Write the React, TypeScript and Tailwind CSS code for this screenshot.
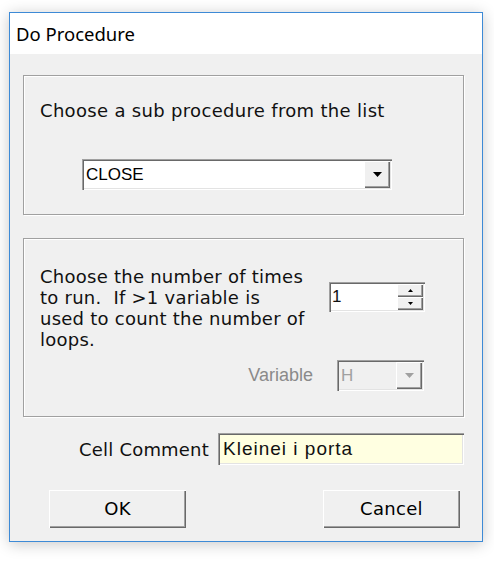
import React from "react";

// classic Win32 3D edges
const raised =
  "shadow-[inset_1px_1px_0_#ffffff,inset_-1px_-1px_0_#696969,inset_-2px_-2px_0_#a0a0a0]";
const sunken =
  "shadow-[inset_1px_1px_0_#a0a0a0,inset_2px_2px_0_#696969,inset_-1px_-1px_0_#ffffff,inset_-2px_-2px_0_#e3e3e3]";
const etched = "border border-[#a0a0a0] shadow-[inset_1px_1px_0_#ffffff,1px_1px_0_#ffffff]";

const verdana = "font-['DejaVu_Sans',Verdana,sans-serif]";
const arial = "font-['Liberation_Sans',Arial,sans-serif]";

const Arrow: React.FC<{ up?: boolean; small?: boolean; color?: string }> = ({ up, small, color = "#000" }) => {
  const w = small ? 5 : 9;
  const h = small ? 3 : 5;
  return (
    <svg width={w} height={h} viewBox={`0 0 ${w} ${h}`}>
      {up ? (
        <path d={`M0 ${h} L${w / 2} 0 L${w} ${h} Z`} fill={color} />
      ) : (
        <path d={`M0 0 L${w} 0 L${w / 2} ${h} Z`} fill={color} />
      )}
    </svg>
  );
};

const Combo: React.FC<{ value: string; disabled?: boolean; className?: string }> = ({ value, disabled, className }) => (
  <div className={`flex p-[2px] ${sunken} ${disabled ? "bg-[#f0f0f0]" : "bg-white"} ${className ?? ""}`}>
    <div className={`flex-1 flex items-center pl-[2px] text-[17px] ${arial} ${disabled ? "text-[#a0a0a0]" : "text-black"}`}>
      {value}
    </div>
    <div className={`w-[26px] flex items-center justify-center bg-[#f0f0f0] ${raised}`}>
      <Arrow color={disabled ? "#a0a0a0" : "#000"} />
    </div>
  </div>
);

const Spin: React.FC<{ value: string; className?: string }> = ({ value, className }) => (
  <div className={`flex w-[96px] h-[30px] p-[2px] bg-white ${sunken} ${className ?? ""}`}>
    <div className={`flex-1 flex items-center pl-[1px] text-[17px] ${arial}`}>{value}</div>
    <div className="w-[26px] flex flex-col">
      <div className={`flex-1 flex items-center justify-center bg-[#f0f0f0] ${raised}`}>
        <Arrow up small />
      </div>
      <div className={`flex-1 flex items-center justify-center bg-[#f0f0f0] ${raised}`}>
        <Arrow small />
      </div>
    </div>
  </div>
);

const Button: React.FC<{ label: string }> = ({ label }) => (
  <button className={`w-[137px] h-[38px] pb-[2px] bg-[#f0f0f0] text-[18px] tracking-[0.3px] text-black ${verdana} ${raised}`}>
    {label}
  </button>
);

export default function App() {
  return (
    <div className="w-[494px] h-[562px] bg-white pt-[12px] pl-[9px]">
      <div className="w-[474px] h-[530px] flex flex-col border border-[#3d8ad6] bg-[#f0f0f0] shadow-[0_2px_14px_rgba(0,0,0,0.22)]">
        {/* Title bar */}
        <div className="h-[41px] bg-white flex items-center pl-[6px] text-[18.5px] text-black font-['Noto_Sans',sans-serif]">
          Do Procedure
        </div>

        {/* Body */}
        <div className={`flex-1 flex flex-col pl-[13px] text-[#111] ${verdana}`}>
          {/* Sub procedure */}
          <div className={`mt-[21px] w-[441px] h-[140px] ${etched} pl-[16px] pt-[24px]`}>
            <p className="text-[18px] leading-[21px] tracking-[0.32px]">Choose a sub procedure from the list</p>
            <Combo value="CLOSE" className="mt-[38px] ml-[42px] w-[310px] h-[31px]" />
          </div>

          {/* Times to run */}
          <div className={`mt-[23px] w-[441px] h-[179px] ${etched}`}>
            <div className="flex pl-[16px] pt-[27px]">
              <p className="w-[289px] text-[18px] leading-[21px] tracking-[0.25px] whitespace-pre">
                {"Choose the number of times\nto run.  If >1 variable is\nused to count the number of\nloops."}
              </p>
              <Spin value="1" className="mt-[16px]" />
            </div>
            <div className="mt-[10px] flex items-center justify-end gap-[24px] pr-[39px]">
              <span className={`text-[18px] text-[#8a8a8a] ${arial}`}>Variable</span>
              <Combo value="H" disabled className="w-[87px] h-[31px]" />
            </div>
          </div>

          {/* Comment */}
          <div className="mt-[16px] flex items-center justify-end gap-[9px] pr-[18px]">
            <span className="text-[18px] tracking-[0.2px]">Cell Comment</span>
            <div className={`w-[246px] h-[32px] flex items-center pl-[5px] bg-[#ffffe1] text-[19px] tracking-[1px] ${arial} ${sunken}`}>
              Kleinei i porta
            </div>
          </div>

          {/* Buttons */}
          <div className="mt-[25px] flex justify-between pl-[26px] pr-[22px]">
            <Button label="OK" />
            <Button label="Cancel" />
          </div>
        </div>
      </div>
    </div>
  );
}
